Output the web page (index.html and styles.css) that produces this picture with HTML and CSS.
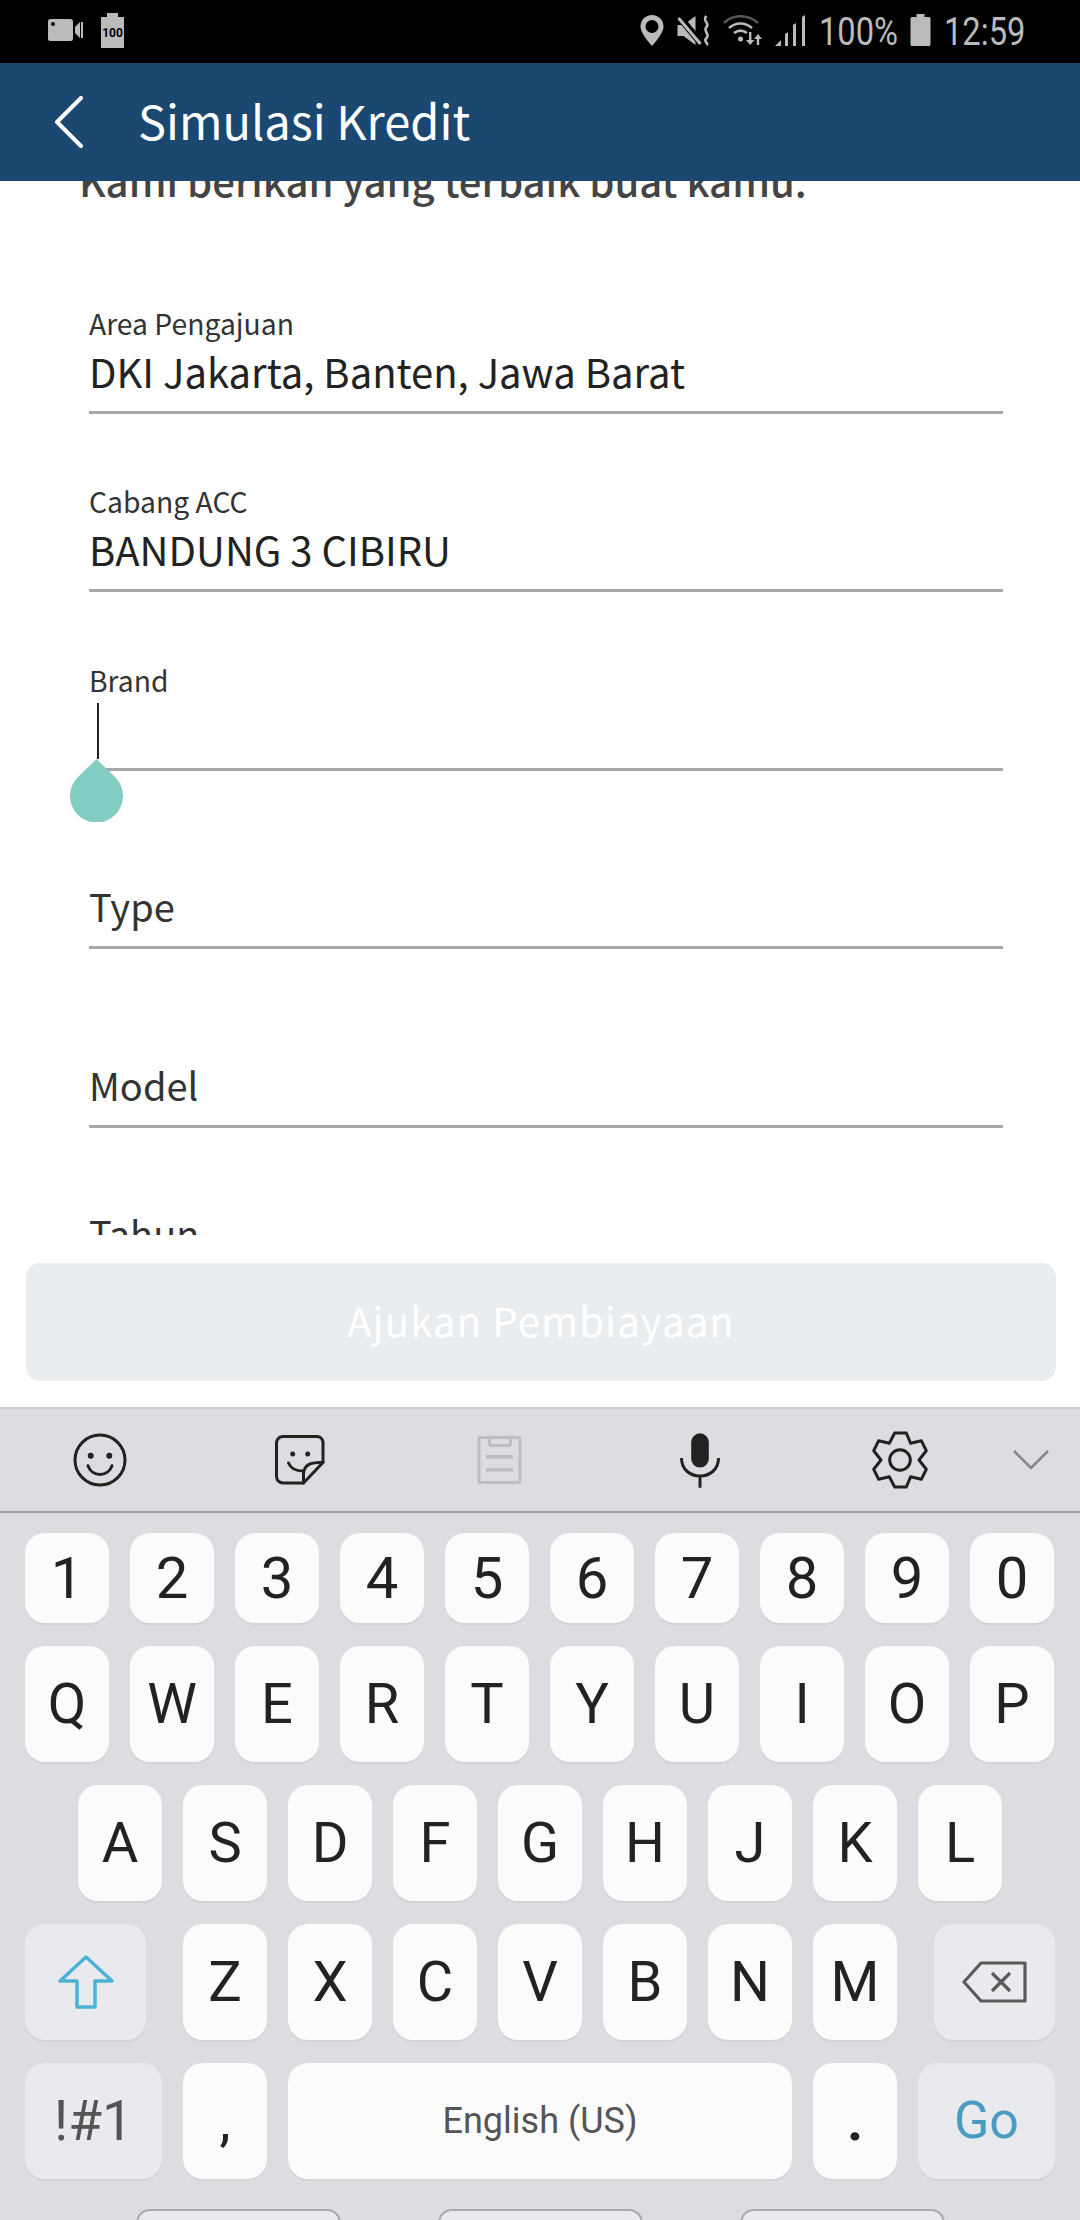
FILE: index.html
```html
<!DOCTYPE html>
<html lang="en">
<head>
    <meta charset="UTF-8">
    <meta name="viewport" content="width=device-width, initial-scale=1.0">
    <title>Simulasi Kredit</title>
    <link rel="stylesheet" href="styles.css">
</head>
<body>
    <div class="status-bar">
        <div class="status-left">
            <svg width="35" height="22" viewBox="0 0 35 22"><rect width="25" height="22" rx="2.5" fill="#bbb"/><circle cx="5" cy="5" r="2" fill="#000"/><path d="M27 8l5-5h3v16h-3l-5-5Z" fill="#bbb"/><rect x="32" y="3" width="1" height="16" fill="#000"/></svg>
            <svg width="23" height="35" viewBox="0 0 23 35"><path d="M0 4h6V0h11v4h6v31H0Z" fill="#bbb"/><text x="11.5" y="24" class="card-text" text-anchor="middle">100</text></svg>
        </div>
        <div class="status-right">
            <svg width="24" height="31" viewBox="0 0 23 31"><path fill="#bbb" fill-rule="evenodd" d="M11.5 0C5 0 0 5 0 11.5 0 19 11.5 31 11.5 31S23 19 23 11.5C23 5 18 0 11.5 0Zm0 5a6.5 6.5 0 1 1 0 13 6.5 6.5 0 0 1 0-13Z"/></svg>
            <svg width="33" height="31" viewBox="0 0 32 31"><path d="M0 10h6L18 1v29L6 21H0Z" fill="#bbb"/><path d="M1 1l24 29" stroke="#000" stroke-width="7"/><path d="M1 3l22 26" stroke="#bbb" stroke-width="3"/><path d="M29 1c-5 5 4 7 0 11s4 7 0 11 3 5 0 7" fill="none" stroke="#bbb" stroke-width="2.6"/></svg>
            <svg width="39" height="31" viewBox="0 0 39 31"><path d="M1 8C10-1 25-1 35 8" fill="none" stroke="#555" stroke-width="2.6"/><path d="M6 13c7-6 16-6 23 0M11 18c4-3 9-3 13 0" fill="none" stroke="#bbb" stroke-width="2.6"/><circle cx="17.500" cy="24" r="2.500" fill="#bbb"/><path d="M26 17h2.400v8h3L27.200 30 23 25h3ZM35 19l4 5h-2.800v6h-2.400v-6H31Z" fill="#bbb"/></svg>
            <svg width="31" height="31" viewBox="0 0 31 31"><path d="M0 31l6-6v6ZM10 31V19l3-2v14ZM18 31V10l3-2v23ZM27 31V2l3-2v31Z" fill="#bbb"/></svg>
            <span class="status-text status-pct">100%</span>
            <svg width="21" height="32" viewBox="0 0 20 32"><path d="M1.500 3H6V0h8v3h4.500A1.500 1.500 0 0 1 20 4.500V30.500A1.500 1.500 0 0 1 18.500 32H1.500A1.500 1.500 0 0 1 0 30.500V4.500A1.500 1.500 0 0 1 1.500 3Z" fill="#bbb"/></svg>
            <span class="status-text status-time">12:59</span>
        </div>
    </div>

    <header class="app-bar">
        <svg class="back" width="30" height="52" viewBox="0 0 30 52"><path d="M26 2L2 26l24 24" fill="none" stroke="#fff" stroke-width="4" stroke-linecap="round" stroke-linejoin="round"/></svg>
        <h1>Simulasi Kredit</h1>
    </header>

    <main class="scroll">
        <div class="scroll-inner">
            <p class="intro">Kami berikan yang terbaik buat kamu.</p>
            <div class="field">
                <label>Area Pengajuan</label>
                <div class="value">DKI Jakarta, Banten, Jawa Barat</div>
            </div>
            <div class="field">
                <label>Cabang ACC</label>
                <div class="value">BANDUNG 3 CIBIRU</div>
            </div>
            <div class="field">
                <label>Brand</label>
                <div class="value"></div>
                <div class="caret"></div>
                <svg class="drop" width="53" height="63" viewBox="0 0 53 63"><path d="M26.500 0L45 18A26.500 26.500 0 1 1 8 18Z" fill="#83ccc4"/></svg>
            </div>
            <div class="field">
                <div class="value placeholder">Type</div>
            </div>
            <div class="field">
                <div class="value placeholder">Model</div>
            </div>
            <div class="field field-last">
                <div class="value placeholder">Tahun</div>
            </div>
        </div>
    </main>

    <div class="submit-wrap">
        <button class="submit" type="button">Ajukan Pembiayaan</button>
    </div>

    <section class="keyboard">
        <div class="toolbar">
            <div class="tools">
                <svg width="60" height="60" viewBox="0 0 60 60"><g fill="none" stroke="#222" stroke-width="3" stroke-linecap="round"><circle cx="30" cy="30" r="25"/><path d="M18 35.700C22 47.500 38 47.500 42 35.700"/></g><circle cx="20.700" cy="25.700" r="3" fill="#222"/><circle cx="39.300" cy="25.700" r="3" fill="#222"/></svg>
                <svg width="60" height="60" viewBox="0 0 60 60"><g fill="none" stroke="#222" stroke-width="3" stroke-linecap="round" stroke-linejoin="round"><path d="M33.500 53H13a6.500 6.500 0 0 1-6.500-6.500V13A6.500 6.500 0 0 1 13 6.500h34a6 6 0 0 1 6 6v20L33.500 53Z"/><path d="M53 32.500C44 32 34 33 33.500 44V53"/><path d="M18.500 33C21 39 27 41 33 41"/></g><circle cx="22.700" cy="24" r="2.500" fill="#222"/><circle cx="37.700" cy="24" r="2.500" fill="#222"/></svg>
                <svg width="60" height="60" viewBox="0 0 60 60"><g fill="none" stroke="#bdbec1" stroke-width="3"><rect x="9" y="7.500" width="41" height="45" rx="1.500"/><path d="M19.500 7.500v6a2 2 0 0 0 2 2h17a2 2 0 0 0 2-2v-6"/></g><path d="M16 25h27v3.500H16ZM16 38h27v3.500H16Z" fill="#bdbec1"/></svg>
                <svg width="60" height="60" viewBox="0 0 60 60"><rect x="21.200" y="3.300" width="17.600" height="34.300" rx="8.800" fill="#222"/><path d="M11.500 28C11.500 52 48.500 52 48.500 28M30 45v12.700" fill="none" stroke="#222" stroke-width="3"/></svg>
                <svg width="60" height="60" viewBox="0 0 60 60"><g fill="none" stroke="#222" stroke-width="3" stroke-linejoin="round"><path d="M24.700 3H36.300L40.700 13.300 51.300 10.700 56.300 20.700 49 30 56.300 39.300 51.300 49.300 40.700 46.700 36.300 57H24.700L19.300 46.700 8.700 49.300 3.700 39.300 11 30 3.700 20.700 8.700 10.700 19.300 13.300Z"/><circle cx="30" cy="30" r="10.300"/></g></svg>
            </div>
            <svg class="hide-kb" width="40" height="24" viewBox="0 0 40 24"><path d="M3 3l17 17L37 3" fill="none" stroke="#85868a" stroke-width="2.500"/></svg>
        </div>

        <div class="keys">
            <div class="row row-num">
                <span class="key">1</span><span class="key">2</span><span class="key">3</span><span class="key">4</span><span class="key">5</span><span class="key">6</span><span class="key">7</span><span class="key">8</span><span class="key">9</span><span class="key">0</span>
            </div>
            <div class="row">
                <span class="key">Q</span><span class="key">W</span><span class="key">E</span><span class="key">R</span><span class="key">T</span><span class="key">Y</span><span class="key">U</span><span class="key">I</span><span class="key">O</span><span class="key">P</span>
            </div>
            <div class="row row-a">
                <span class="key">A</span><span class="key">S</span><span class="key">D</span><span class="key">F</span><span class="key">G</span><span class="key">H</span><span class="key">J</span><span class="key">K</span><span class="key">L</span>
            </div>
            <div class="row">
                <span class="key key-fn key-shift">
                    <svg width="58" height="58" viewBox="0 0 58 58"><path d="M29 4L3 28h17v26h18V28h17Z" fill="none" stroke="#4db1d6" stroke-width="3.500" stroke-linejoin="round"/></svg>
                </span>
                <span class="key">Z</span><span class="key">X</span><span class="key">C</span><span class="key">V</span><span class="key">B</span><span class="key">N</span><span class="key">M</span>
                <span class="key key-fn key-back">
                    <svg width="66" height="42" viewBox="0 0 66 42"><path d="M2 21L19 2h44v38H19Z" fill="none" stroke="#5a5a5a" stroke-width="3.200" stroke-linejoin="round"/><path d="M30 12l18 18M48 12L30 30" fill="none" stroke="#5a5a5a" stroke-width="3.200"/></svg>
                </span>
            </div>
            <div class="row">
                <span class="key key-fn key-wide key-sym">!#1</span>
                <span class="key">,</span>
                <span class="key key-space">English (US)</span>
                <span class="key key-dot">.</span>
                <span class="key key-fn key-wide key-go">Go</span>
            </div>
        </div>

        <div class="tabs">
            <div class="tab"></div>
            <div class="tab"></div>
            <div class="tab"></div>
        </div>
    </section>
</body>
</html>
```

FILE: styles.css
```css
* {
    box-sizing: border-box;
}
html, body {
    margin: 0;
    padding: 0;
}
body {
    width: 1080px;
    height: 2220px;
    overflow: hidden;
    background-color: white;
    font-family: "Noto Sans CJK SC", "Noto Sans", sans-serif;
}

/* status bar */
.status-bar {
    height: 63px;
    background-color: black;
    display: flex;
    align-items: center;
    justify-content: space-between;
    padding: 0 55px 3px 48px;
}
.status-left {
    display: flex;
    align-items: center;
    gap: 18px;
}
.status-right {
    display: flex;
    align-items: center;
    gap: 13px;
}
.card-text {
    font-family: Roboto, sans-serif;
    font-size: 12px;
    font-weight: 700;
    fill: #000;
}
.status-text {
    margin-top: 3px;
    font-family: Roboto, sans-serif;
    font-size: 38px;
    color: #bbb;
    white-space: nowrap;
    transform: scaleX(0.86);
    transform-origin: left center;
}
.status-pct {
    width: 78px;
}
.status-time {
    width: 81px;
}

/* app bar */
.app-bar {
    height: 118px;
    background-color: #1b4870;
    display: flex;
    align-items: center;
    padding-left: 55px;
    gap: 53px;
}
.app-bar h1 {
    margin: 0;
    padding-bottom: 5px;
    color: white;
    font-size: 47px;
    font-weight: 400;
    line-height: 1;
}

/* form */
.scroll {
    height: 1054px;
    overflow: hidden;
}
.scroll-inner {
    margin-top: -29px;
    padding: 0 77px 0 89px;
}
.intro {
    margin: 0 0 27px -10px;
    height: 56px;
    line-height: 56px;
    font-size: 40.1px;
    font-weight: 500;
    color: #444;
}
.field {
    position: relative;
    height: 178.6px;
    display: flex;
    flex-direction: column;
    justify-content: flex-end;
}
.field-last {
    margin-top: -30.6px;
}
.field label {
    height: 40px;
    line-height: 40px;
    font-size: 28.3px;
    color: #333;
}
.value {
    height: 71px;
    line-height: 56px;
    font-size: 40px;
    color: #222;
    border-bottom: 3px solid #a8a8a8;
}
.placeholder {
    font-size: 38px;
    color: #333;
}
.caret {
    position: absolute;
    left: 8px;
    bottom: 12px;
    width: 2px;
    height: 56px;
    background-color: #222;
}
.drop {
    position: absolute;
    left: -19px;
    bottom: -51px;
}

/* submit button */
.submit-wrap {
    padding: 28px 24px 26px 26px;
}
.submit {
    display: block;
    width: 100%;
    height: 118px;
    padding: 0 0 5px;
    border: none;
    border-radius: 14px;
    background-color: #eaedf0;
    color: white;
    font-family: inherit;
    font-size: 40px;
    letter-spacing: 1.15px;
}

/* keyboard */
.keyboard {
    height: 813px;
    overflow: hidden;
    background-color: #dcdde1;
    border-top: 2px solid #cbcccc;
    font-family: Roboto, sans-serif;
}
.toolbar {
    height: 104px;
    display: flex;
    align-items: center;
    padding: 0 29px 0 69.5px;
    border-bottom: 2px solid #a3a4a6;
}
.tools {
    display: flex;
    gap: 140.2px;
}
.hide-kb {
    margin-left: auto;
}
.keys {
    display: flex;
    flex-direction: column;
    gap: 23px;
    padding: 20px 25px 0;
}
.row {
    display: flex;
    gap: 21px;
    height: 116px;
}
.row-num {
    height: 90px;
}
.row-a {
    padding-left: 53px;
}
.key {
    width: 84px;
    display: flex;
    align-items: center;
    justify-content: center;
    background-color: #fbfbfb;
    border-radius: 20px;
    box-shadow: 0 2px 0 #d2d3d7;
    color: #222;
    font-size: 56px;
    line-height: 1;
}
.row-num .key {
    font-size: 58px;
}
.key-fn {
    background-color: #e9eaee;
}
.key-shift, .key-back {
    width: 121px;
}
.key-shift {
    margin-right: 16px;
}
.key-back {
    margin-left: 16px;
}
.key-wide {
    width: 137px;
}
.key-space {
    width: 504px;
    font-size: 36px;
    color: #555;
}
.key-dot {
    font-weight: 700;
}
.key-sym {
    font-size: 55px;
    color: #555;
}
.key-go {
    font-size: 52px;
    color: #4a9dc0;
}
.tabs {
    display: flex;
    justify-content: center;
    gap: 97px;
    margin-top: 30px;
}
.tab {
    width: 205px;
    height: 40px;
    border: 2px solid #a9a9ad;
    border-radius: 14px 14px 0 0;
    background-color: #e9eaee;
}
```
